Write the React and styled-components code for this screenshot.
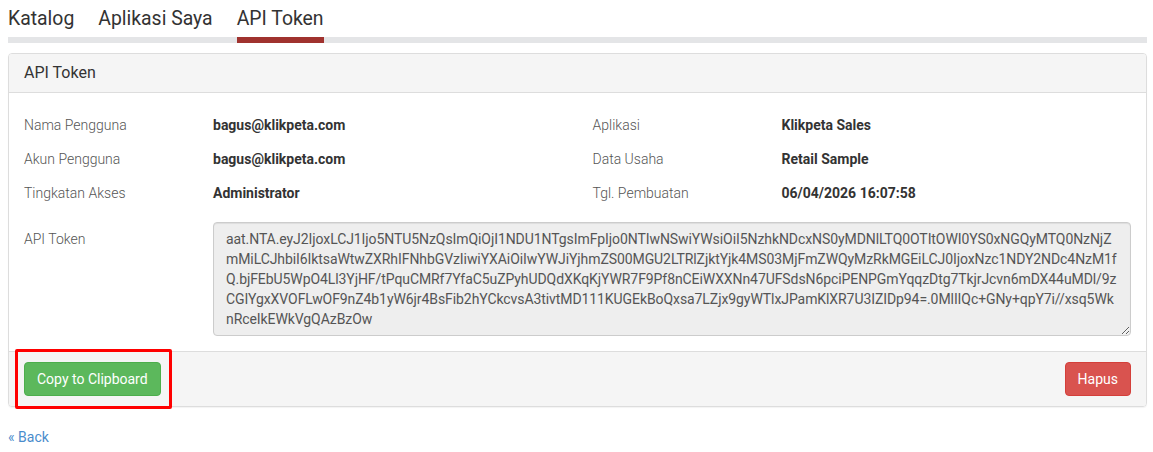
import React from 'react'
import styled, { createGlobalStyle } from 'styled-components'

const GlobalStyle = createGlobalStyle`
  body {
    margin: 0;
    background: #fff;
    font-family: Roboto, "Liberation Sans", Arial, sans-serif;
    font-size: 14px;
    line-height: 20px;
    color: #333;
  }
`

const TOKEN =
  'aat.NTA.eyJ2IjoxLCJ1Ijo5NTU5NzQsImQiOjI1NDU1NTgsImFpIjo0NTIwNSwiYWsiOiI5NzhkNDcxNS0yMDNlLTQ0OTItOWI0YS0xNGQyMTQ0NzNjZmMiLCJhbiI6IktsaWtwZXRhIFNhbGVzIiwiYXAiOiIwYWJiYjhmZS00MGU2LTRlZjktYjk4MS03MjFmZWQyMzRkMGEiLCJ0IjoxNzc1NDY2NDc4NzM1fQ.bjFEbU5WpO4Ll3YjHF/tPquCMRf7YfaC5uZPyhUDQdXKqKjYWR7F9Pf8nCEiWXXNn47UFSdsN6pciPENPGmYqqzDtg7TkjrJcvn6mDX44uMDl/9zCGIYgxXVOFLwOF9nZ4b1yW6jr4BsFib2hYCkcvsA3tivtMD111KUGEkBoQxsa7LZjx9gyWTlxJPamKlXR7U3IZIDp94=.0MlIIQc+GNy+qpY7i//xsq5WknRceIkEWkVgQAzBzOw'

const Page = styled.div`
  padding: 0 6px 0 8px;
`

const Tabs = styled.nav`
  display: flex;
  gap: 24px;
  border-bottom: 6px solid #e4e5e7;
`

const Tab = styled.a`
  display: block;
  padding: 7px 0 6px;
  margin-bottom: -6px;
  font-size: 19.4px;
  line-height: 24px;
  color: #333;
  text-decoration: none;
  border-bottom: 6px solid ${p => (p.$active ? '#a0322e' : 'transparent')};
  cursor: pointer;
`

const Panel = styled.section`
  margin: 10px 0 20px;
  border: 1px solid #ddd;
  border-radius: 4px;
  box-shadow: 0 1px 1px rgba(0,0,0,0.05);
`

const PanelHeading = styled.header`
  padding: 10px 15px;
  background: #f5f5f5;
  border-bottom: 1px solid #ddd;
  border-radius: 3px 3px 0 0;
`

const PanelTitle = styled.h3`
  margin: 0;
  font-size: 16px;
  font-weight: 400;
  line-height: 1.1;
  color: #333;
`

const PanelBody = styled.div`
  padding: 15px;
`

const InfoGrid = styled.div`
  display: grid;
  grid-template-columns: 1fr 1fr;
  column-gap: 30px;
`

const InfoColumn = styled.div`
  display: flex;
  flex-direction: column;
`

const Row = styled.div`
  display: grid;
  grid-template-columns: 189px 1fr;
  min-height: 34px;
  margin-top: ${p => (p.$gap ? '12px' : '0')};
`

const Label = styled.div`
  padding-top: 7px;
  font-weight: 300;
  color: #555;
`

const Value = styled.div`
  padding: 7px 0;
  font-weight: 700;
  color: #333;
`

const TokenArea = styled.textarea`
  display: block;
  box-sizing: border-box;
  width: 100%;
  height: 114px;
  padding: 6px 12px;
  margin: 0;
  border: 1px solid #ccc;
  border-radius: 4px;
  background: #eee;
  box-shadow: inset 0 1px 1px rgba(0,0,0,0.075);
  font-family: Roboto, "Liberation Sans", Arial, sans-serif;
  font-size: 14px;
  line-height: 20px;
  letter-spacing: -0.08px;
  color: #555;
  resize: vertical;
  outline: none;
`

const PanelFooter = styled.footer`
  display: flex;
  justify-content: space-between;
  align-items: center;
  padding: 10px 15px;
  background: #f5f5f5;
  border-top: 1px solid #ddd;
  border-radius: 0 0 3px 3px;
`

const Highlight = styled.div`
  position: relative;

  &::after {
    content: '';
    position: absolute;
    top: -13px;
    left: -9px;
    right: -11px;
    bottom: -13px;
    border: 3px solid #ff0000;
    border-radius: 2px;
    pointer-events: none;
  }
`

const Button = styled.button`
  display: block;
  padding: 6px 12px;
  font-family: Roboto, "Liberation Sans", Arial, sans-serif;
  font-size: 14px;
  line-height: 20px;
  color: #fff;
  border-radius: 4px;
  cursor: pointer;
  background: ${p => (p.$variant === 'danger' ? '#d9534f' : '#5cb85c')};
  border: 1px solid ${p => (p.$variant === 'danger' ? '#d43f3a' : '#4cae4c')};
`

const BackLink = styled.a`
  display: inline-block;
  font-size: 14px;
  line-height: 20px;
  color: #4a8ccc;
  text-decoration: none;
`

const leftInfo = [
  ['Nama Pengguna', 'bagus@klikpeta.com'],
  ['Akun Pengguna', 'bagus@klikpeta.com'],
  ['Tingkatan Akses', 'Administrator'],
]

const rightInfo = [
  ['Aplikasi', 'Klikpeta Sales'],
  ['Data Usaha', 'Retail Sample'],
  ['Tgl. Pembuatan', '06/04/2026 16:07:58'],
]

export default function App() {
  return (
    <Page>
      <GlobalStyle />
      <Tabs>
        <Tab>Katalog</Tab>
        <Tab>Aplikasi Saya</Tab>
        <Tab $active>API Token</Tab>
      </Tabs>

      <Panel>
        <PanelHeading>
          <PanelTitle>API Token</PanelTitle>
        </PanelHeading>
        <PanelBody>
          <InfoGrid>
            <InfoColumn>
              {leftInfo.map(([k, v]) => (
                <Row key={k}>
                  <Label>{k}</Label>
                  <Value>{v}</Value>
                </Row>
              ))}
            </InfoColumn>
            <InfoColumn>
              {rightInfo.map(([k, v]) => (
                <Row key={k}>
                  <Label>{k}</Label>
                  <Value>{v}</Value>
                </Row>
              ))}
            </InfoColumn>
          </InfoGrid>
          <Row $gap>
            <Label>API Token</Label>
            <TokenArea readOnly value={TOKEN} />
          </Row>
        </PanelBody>
        <PanelFooter>
          <Highlight>
            <Button>Copy to Clipboard</Button>
          </Highlight>
          <Button $variant="danger">Hapus</Button>
        </PanelFooter>
      </Panel>

      <BackLink href="#">« Back</BackLink>
    </Page>
  )
}
